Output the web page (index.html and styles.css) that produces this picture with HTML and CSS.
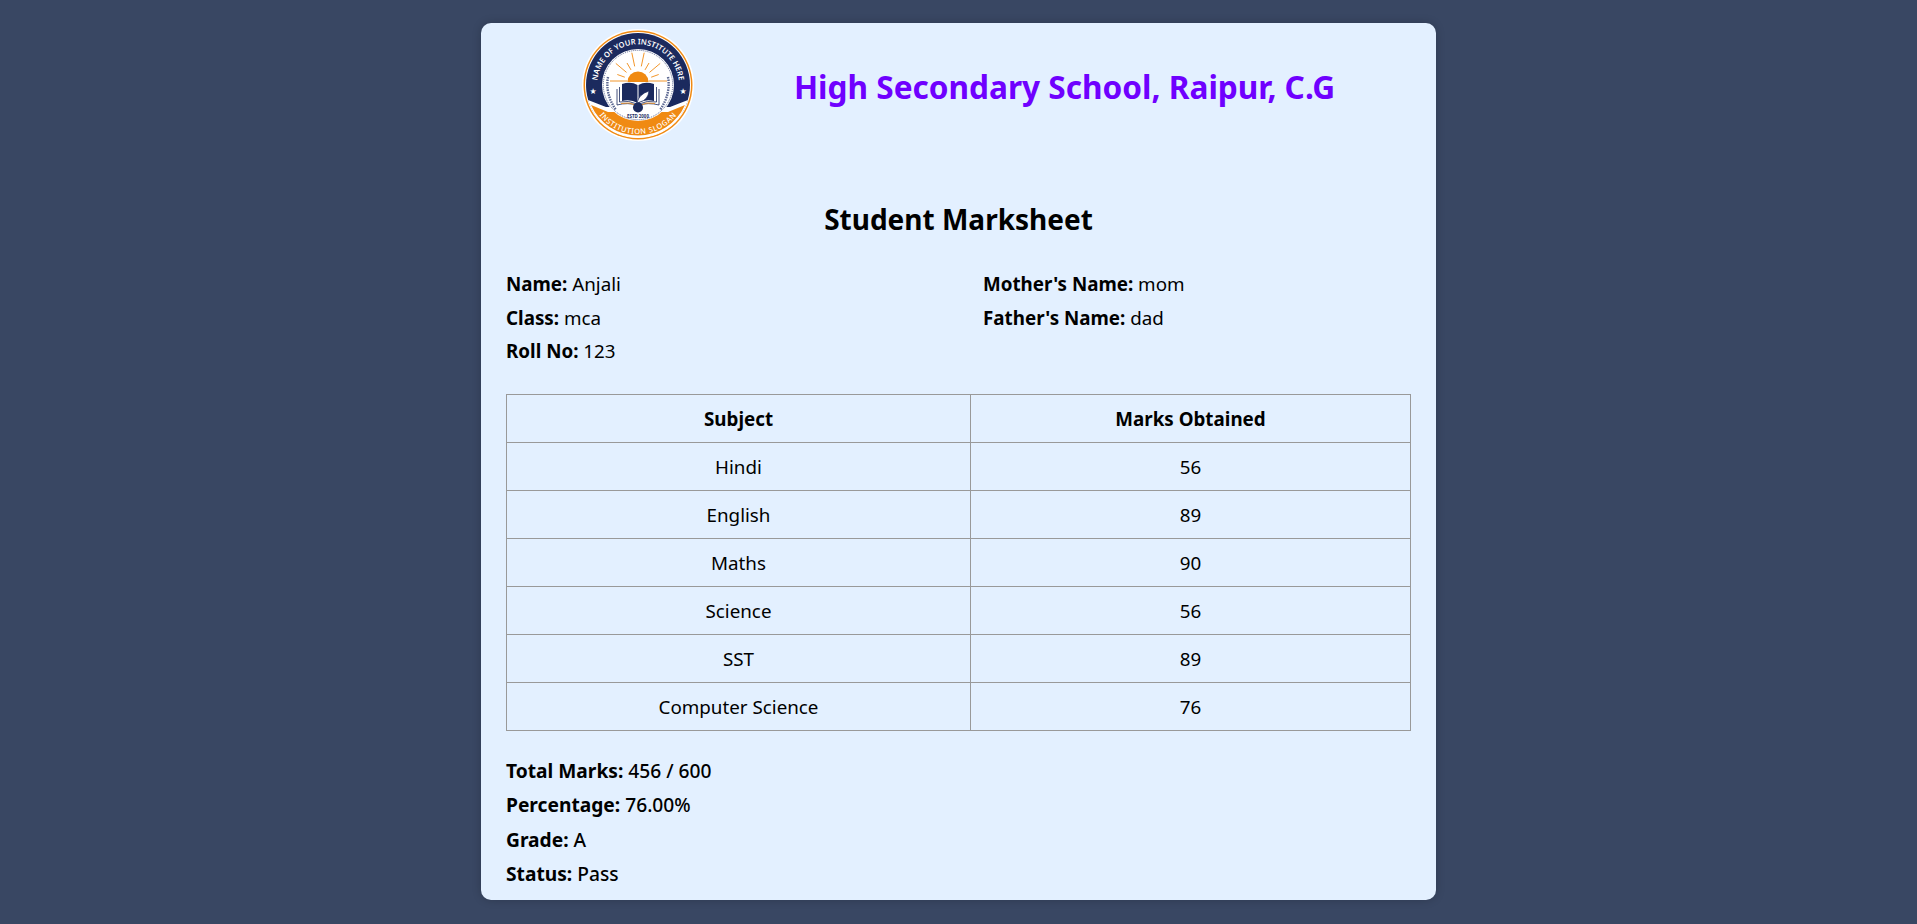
FILE: index.html
```html
<!DOCTYPE html>
<html lang="en">
<head>
<meta charset="utf-8">
<title>Student Marksheet</title>
<link rel="stylesheet" href="styles.css">
</head>
<body>
<main class="sheet">
  <header class="school">
    <div class="logo-cell">
      <svg class="logo" viewBox="0 0 112 112" role="img" aria-label="Institute logo">
        <defs>
          <path id="arcTop" d="M15.4 62 A41 41 0 1 1 96.6 62"/>
          <path id="arcBot" d="M7.5 63 A49 49 0 0 0 104.5 63"/>
        </defs>
        <circle class="lg-white" cx="56" cy="56" r="56"/>
        <circle class="lg-orange" cx="56" cy="56" r="54.5"/>
        <circle class="lg-white" cx="56" cy="56" r="53"/>
        <circle class="lg-navy" cx="56" cy="56" r="52"/>
        <path class="lg-white" d="M6 71 L24 78 L88 78 L106 71 A52 52 0 0 1 6 71Z"/>
        <path class="lg-orange" d="M9 76 A51.5 51.5 0 0 0 103 76 L86 83 L26 83Z"/>
        <circle class="lg-white" cx="56" cy="56" r="36"/>
        <circle class="lg-dots" cx="56" cy="56" r="34.7"/>
        <text class="logo-top"><textPath href="#arcTop" startOffset="50%" text-anchor="middle">NAME OF YOUR INSTITUTE HERE</textPath></text>
        <text class="logo-bot"><textPath href="#arcBot" startOffset="50%" text-anchor="middle">INSTITUTION SLOGAN</textPath></text>
        <text class="logo-star" x="11" y="65" text-anchor="middle">★</text>
        <text class="logo-star" x="101" y="65" text-anchor="middle">★</text>
        <path class="lg-rays" d="M59.3 37.4 L62.2 23.7M52.7 37.4 L49.8 23.7M67.5 43.4 L78.2 34.4M44.5 43.4 L33.8 34.4M63 40.9 L67 34M49 40.9 L45 34M69.2 48.2 L76.7 45.5M42.8 48.2 L35.3 45.5M28 52H45.5M66.5 52H85"/>
        <path class="lg-orange" d="M45.5 53 A10.5 10.5 0 0 1 66.5 53Z"/>
        <path class="lg-navy" d="M40 55 Q49 52 55.5 56 V74 Q49 70 40 72Z"/>
        <path class="lg-navy" d="M72 55 Q63 52 56.5 56 V74 Q63 70 72 72Z"/>
        <path class="lg-line-navy" d="M37.5 58 V73 Q47 71 55 75M74.5 58 V73 Q65 71 57 75M35 60 V76 Q46 73 56 76.5 Q66 73 77 76V60"/>
        <path class="lg-line-orange" d="M39 74.5 Q47 72.5 55 76.5M73 74.5 Q65 72.5 57 76.5"/>
        <path class="lg-white lg-quill" d="M55 74 Q57 65 67 62 Q66 71 58 73Z"/>
        <circle class="lg-navy" cx="56" cy="78.5" r="5"/>
        <path class="lg-laurel" d="M26 48 Q23 65 34 81M86 48 Q89 65 78 81"/>
        <text class="logo-estd" x="56" y="88.5" text-anchor="middle">ESTD 2000</text>
      </svg>
    </div>
    <h1 class="school-name">High Secondary School, Raipur, C.G</h1>
  </header>

  <h2 class="title">Student Marksheet</h2>

  <section class="details">
    <div>
      <p><strong>Name:</strong> Anjali</p>
      <p><strong>Class:</strong> mca</p>
      <p><strong>Roll No:</strong> 123</p>
    </div>
    <div>
      <p><strong>Mother's Name:</strong> mom</p>
      <p><strong>Father's Name:</strong> dad</p>
    </div>
  </section>

  <table class="marks">
    <thead>
      <tr><th>Subject</th><th>Marks Obtained</th></tr>
    </thead>
    <tbody>
      <tr><td>Hindi</td><td>56</td></tr>
      <tr><td>English</td><td>89</td></tr>
      <tr><td>Maths</td><td>90</td></tr>
      <tr><td>Science</td><td>56</td></tr>
      <tr><td>SST</td><td>89</td></tr>
      <tr><td>Computer Science</td><td>76</td></tr>
    </tbody>
  </table>

  <section class="summary">
    <p><strong>Total Marks:</strong> 456 / 600</p>
    <p><strong>Percentage:</strong> 76.00%</p>
    <p><strong>Grade:</strong> A</p>
    <p><strong>Status:</strong> Pass</p>
  </section>
</main>
</body>
</html>
```
FILE: styles.css
```css
* { box-sizing: border-box; }
html, body { height: 100%; }
body {
  margin: 0;
  background: #394763;
  font-family: "Noto Sans", "Open Sans", sans-serif;
  color: #000;
  font-size: 18.8px;
  padding-top: 23px;
}
.sheet {
  width: 955px;
  height: 877px;
  margin: 0 auto;
  padding: 0 25px;
  background: #e3f0ff;
  border-radius: 10px;
  box-shadow: 0 0 10px rgba(0,0,0,.2);
  overflow: hidden;
}
.school { display: flex; height: 130px; }
.logo-cell { width: 230px; padding: 6px 0 0 76px; flex: none; }
.logo { display: block; width: 112px; height: 112px; }
.lg-white { fill: #fff; }
.lg-orange { fill: #f08a12; }
.lg-navy { fill: #1b2a5e; }
.lg-dots { fill: none; stroke: #5a6690; stroke-width: 1; stroke-dasharray: 1 1; }
.lg-rays { fill: none; stroke: #f08a12; stroke-width: .9; }
.lg-line-navy { fill: none; stroke: #1b2a5e; stroke-width: .8; }
.lg-line-orange { fill: none; stroke: #f08a12; stroke-width: .8; }
.lg-quill { stroke: #1b2a5e; stroke-width: .7; }
.lg-laurel { fill: none; stroke: #5a6690; stroke-width: 2.4; stroke-dasharray: 1.5 1; }
.logo-top { font: 600 7.6px "Noto Sans", sans-serif; fill: #fff; }
.logo-bot { font: 500 7.4px "Noto Sans", sans-serif; fill: #fff; letter-spacing: .6px; }
.logo-star { font: 8px "DejaVu Sans", sans-serif; fill: #fff; }
.logo-estd { font: 700 4.4px "Noto Sans", sans-serif; fill: #1b2a5e; }
.school-name {
  margin: 0;
  flex: 1;
  font-size: 31.6px;
  line-height: 44px;
  padding: 42px 18px 0 0;
  color: #6f00ff;
  font-weight: 700;
  text-align: center;
}
.title { margin: 46px 0 0; font-size: 28px; line-height: 40px; text-align: center; font-weight: 700; }
.details { display: grid; grid-template-columns: 477px 1fr; margin-top: 29px; }
.details p { margin: 0; line-height: 33.7px; }
.marks {
  width: 100%;
  margin-top: 25px;
  border-collapse: collapse;
  font-size: 18.8px;
}
.marks th, .marks td {
  border: 1px solid #999;
  height: 48px;
  padding: 1px 0 0;
  text-align: center;
}
.marks th:first-child { width: 464px; }
.summary { margin-top: 23px; font-size: 19.2px; font-weight: 500; }
.summary p { margin: 0; line-height: 34.3px; }
```
